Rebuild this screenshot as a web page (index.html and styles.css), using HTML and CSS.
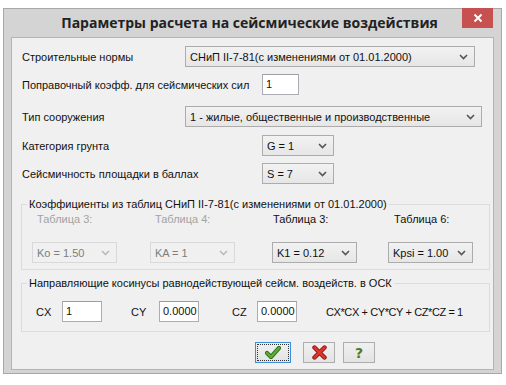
FILE: index.html
```html
<!DOCTYPE html>
<html>
<head>
<meta charset="utf-8">
<link rel="stylesheet" href="styles.css">
</head>
<body>
<div class="window">
  <div class="titlebar">
    <div class="title">Параметры расчета на сейсмические воздействия</div>
    <div class="close"><svg width="10" height="10" viewBox="0 0 10 10"><path d="M1.5 1.5 L8.5 8.5 M8.5 1.5 L1.5 8.5" stroke="#fff" stroke-width="2"/></svg></div>
  </div>
  <div class="content">
    <div class="row">
      <span class="label lw-a">Строительные нормы</span>
      <div class="select s-norms"><span class="stext">СНиП II-7-81(с изменениями от 01.01.2000)</span><svg class="chev" width="9" height="6" viewBox="0 0 9 6"><path d="M1 1 L4.5 4.5 L8 1" fill="none" stroke="#555" stroke-width="1.6"/></svg></div>
    </div>
    <div class="row r2">
      <span class="label lw-b">Поправочный коэфф. для сейсмических сил</span>
      <div class="input i-coef">1</div>
    </div>
    <div class="row r3">
      <span class="label lw-a">Тип сооружения</span>
      <div class="select s-type"><span class="stext">1 - жилые, общественные и производственные</span><svg class="chev" width="9" height="6" viewBox="0 0 9 6"><path d="M1 1 L4.5 4.5 L8 1" fill="none" stroke="#555" stroke-width="1.6"/></svg></div>
    </div>
    <div class="row r4">
      <span class="label lw-b">Категория грунта</span>
      <div class="select s-short"><span class="stext">G = 1</span><svg class="chev" width="9" height="6" viewBox="0 0 9 6"><path d="M1 1 L4.5 4.5 L8 1" fill="none" stroke="#555" stroke-width="1.6"/></svg></div>
    </div>
    <div class="row r5">
      <span class="label lw-b">Сейсмичность площадки в баллах</span>
      <div class="select s-short"><span class="stext">S = 7</span><svg class="chev" width="9" height="6" viewBox="0 0 9 6"><path d="M1 1 L4.5 4.5 L8 1" fill="none" stroke="#555" stroke-width="1.6"/></svg></div>
    </div>

    <fieldset class="group g1">
      <legend>Коэффициенты из таблиц СНиП II-7-81(с изменениями от 01.01.2000)</legend>
      <div class="tables">
        <div class="tcol c1">
          <div class="tlabel off tl1">Таблица 3:</div>
          <div class="select s-tab off"><span class="stext">Ko = 1.50</span><svg class="chev" width="9" height="6" viewBox="0 0 9 6"><path d="M1 1 L4.5 4.5 L8 1" fill="none" stroke="#b5b5b5" stroke-width="1.4"/></svg></div>
        </div>
        <div class="tcol c2">
          <div class="tlabel off tl2">Таблица 4:</div>
          <div class="select s-tab off"><span class="stext">KA = 1</span><svg class="chev" width="9" height="6" viewBox="0 0 9 6"><path d="M1 1 L4.5 4.5 L8 1" fill="none" stroke="#b5b5b5" stroke-width="1.4"/></svg></div>
        </div>
        <div class="tcol c3">
          <div class="tlabel tl3">Таблица 3:</div>
          <div class="select s-tab"><span class="stext">K1 = 0.12</span><svg class="chev" width="9" height="6" viewBox="0 0 9 6"><path d="M1 1 L4.5 4.5 L8 1" fill="none" stroke="#555" stroke-width="1.6"/></svg></div>
        </div>
        <div class="tcol c4">
          <div class="tlabel tl4">Таблица 6:</div>
          <div class="select s-tab"><span class="stext">Kpsi = 1.00</span><svg class="chev" width="9" height="6" viewBox="0 0 9 6"><path d="M1 1 L4.5 4.5 L8 1" fill="none" stroke="#555" stroke-width="1.6"/></svg></div>
        </div>
      </div>
    </fieldset>

    <fieldset class="group g2">
      <legend>Направляющие косинусы равнодействующей сейсм. воздейств. в ОСК</legend>
      <div class="coords">
        <span class="clabel cx">CX</span>
        <div class="input i-c">1</div>
        <span class="clabel cy">CY</span>
        <div class="input i-c">0.0000</div>
        <span class="clabel cz">CZ</span>
        <div class="input i-c">0.0000</div>
        <span class="formula">CX*CX + CY*CY + CZ*CZ = 1</span>
      </div>
    </fieldset>

    <div class="buttons">
      <div class="btn btn-ok"><div class="focus"><svg width="16" height="13" viewBox="0 0 16 13"><path d="M2 7 L6 11 L14 2" fill="none" stroke="#2f6e1f" stroke-width="4.2" stroke-linejoin="round" stroke-linecap="round"/><path d="M2 7 L6 11 L14 2" fill="none" stroke="#5cb030" stroke-width="2.4" stroke-linejoin="round" stroke-linecap="round"/></svg></div></div>
      <div class="btn btn-cancel"><svg width="15" height="15" viewBox="0 0 15 15"><path d="M2.5 2.5 L12.5 12.5 M12.5 2.5 L2.5 12.5" stroke="#7a1410" stroke-width="4.4" stroke-linecap="round"/><path d="M2.5 2.5 L12.5 12.5 M12.5 2.5 L2.5 12.5" stroke="#e0332b" stroke-width="2.6" stroke-linecap="round"/></svg></div>
      <div class="btn btn-help"><span class="q">?</span></div>
    </div>
  </div>
</div>
</body>
</html>
```

FILE: styles.css
```css
body {
  margin: 0;
  background: #ffffff;
  font-family: "Liberation Sans", Arial, sans-serif;
  font-size: 11px;
  color: #111;
}

.window {
  margin: 8px 0 0 3px;
  width: 499px;
  height: 366px;
  box-sizing: border-box;
  background: #d4d4d4;
  border: 1px solid #a8a8a8;
  padding: 0 7px 3px 7px;
  display: flex;
  flex-direction: column;
}

.titlebar {
  height: 28px;
  display: flex;
  align-items: flex-start;
  flex-shrink: 0;
}

.title {
  flex: 1;
  text-align: center;
  padding-left: 26px;
  line-height: 27px;
  font-family: "Open Sans", "Noto Sans", sans-serif;
  font-weight: bold;
  font-size: 14px;
  color: #222;
  white-space: nowrap;
}

.close {
  width: 31px;
  height: 20px;
  margin-top: -1px;
  margin-right: 1px;
  background: #c75050;
  display: flex;
  align-items: center;
  justify-content: center;
}

.content {
  flex: 1;
  background: #f0f0f0;
  border: 1px solid #b4b4b4;
  padding: 8px 0 0 10px;
}

.row {
  display: flex;
  align-items: center;
  height: 21px;
}
.r2 { margin-top: 7px; }
.r3 { margin-top: 11px; }
.r4 { margin-top: 8px; }
.r5 { margin-top: 7px; }

.label { white-space: nowrap; }
.lw-a { width: 163px; }
.lw-b { width: 240px; }

.select {
  display: flex;
  align-items: center;
  height: 21px;
  box-sizing: border-box;
  border: 1px solid #acacac;
  background: linear-gradient(#f2f2f2, #e6e6e6);
  padding-left: 4px;
}
.stext { flex: 1; white-space: nowrap; overflow: hidden; }
.chev { margin-right: 6px; flex-shrink: 0; }

.s-norms { width: 290px; }
.s-type { width: 297px; }
.s-short { width: 72px; }
.s-tab { width: 85px; }

.select.off {
  border-color: #d9d9d9;
  background: #f0f0f0;
  color: #7d7d7d;
}

.input {
  height: 21px;
  box-sizing: border-box;
  border: 1px solid #abadb3;
  border-top-color: #9a9da4;
  background: #fff;
  padding-left: 3px;
  line-height: 18px;
}
.i-coef { width: 37px; }
.i-c { width: 40px; }

.group {
  margin: 0;
  padding: 0;
  border: 1px solid #dcdcdc;
  width: 469px;
  box-sizing: border-box;
  margin-left: -1px;
}
.group legend {
  margin-left: 5px;
  padding: 0 2px;
  line-height: 14px;
  white-space: nowrap;
}
.g1 { margin-top: 13px; }
.g2 { margin-top: 6px; }

.tables {
  display: flex;
  padding: 1px 0 6px 10px;
}
.c1 { width: 118px; }
.c2 { width: 122px; }
.c3 { width: 116px; }
.c4 { width: 85px; }
.tlabel { line-height: 14px; margin-bottom: 16px; white-space: nowrap; }
.tlabel.off { color: #a3a3a3; }
.tl1, .tl2 { margin-left: 5px; }
.tl3 { margin-left: 1px; }
.tl4 { margin-left: 6px; }

.coords {
  display: flex;
  align-items: center;
  padding: 11px 0 9px 14px;
}
.clabel { white-space: nowrap; }
.cx { width: 26px; }
.cy { width: 28px; margin-left: 29px; }
.cz { width: 25px; margin-left: 33px; }
.formula { margin-left: 29px; white-space: nowrap; letter-spacing: -0.4px; }

.buttons {
  display: flex;
  margin-top: 10px;
  margin-left: 233px;
}
.btn {
  height: 21px;
  box-sizing: border-box;
  border: 1px solid #adadad;
  background: linear-gradient(#f0f0f0, #e3e3e3);
  display: flex;
  align-items: center;
  justify-content: center;
}
.btn-ok {
  width: 36px;
  border-color: #3c8ddc;
  padding: 1px;
}
.btn-ok .focus {
  flex: 1;
  align-self: stretch;
  border: 1px dotted #333;
  display: flex;
  align-items: center;
  justify-content: center;
}
.btn-cancel { width: 32px; margin-left: 12px; }
.btn-help { width: 32px; margin-left: 8px; }
.q {
  font-family: "DejaVu Sans", sans-serif;
  font-weight: bold;
  font-size: 14px;
  color: #4d7a22;
  line-height: 1;
}
```
